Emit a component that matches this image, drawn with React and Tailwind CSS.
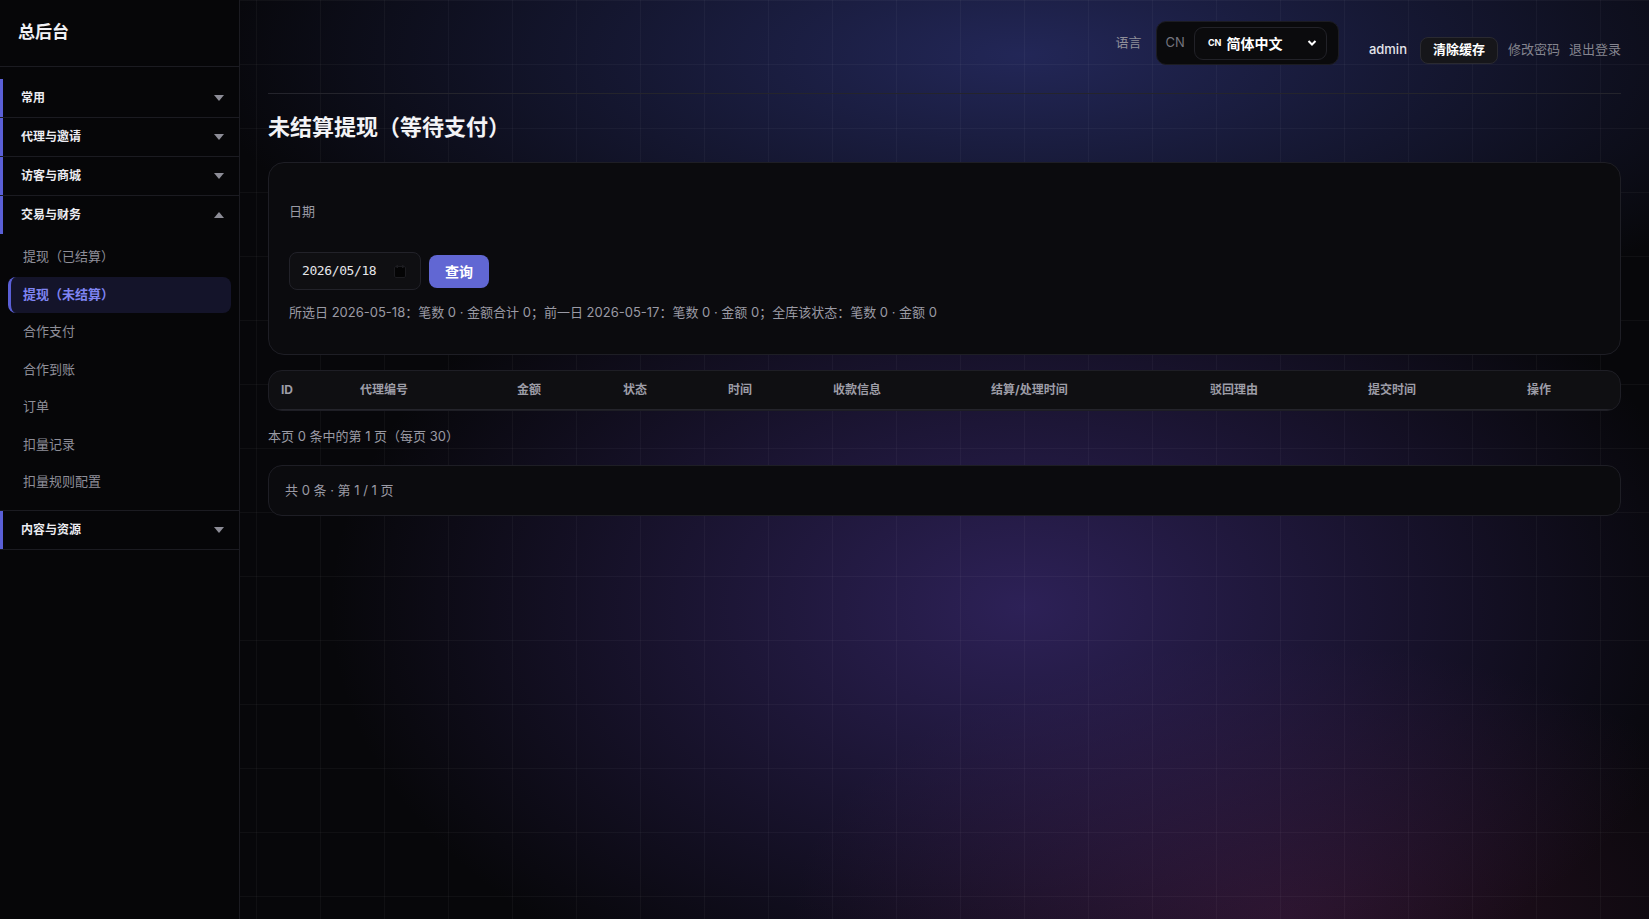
import React from 'react';

const groups = [
  { label: '常用' },
  { label: '代理与邀请' },
  { label: '访客与商城' },
  {
    label: '交易与财务',
    open: true,
    items: ['提现（已结算）', '提现（未结算）', '合作支付', '合作到账', '订单', '扣量记录', '扣量规则配置'],
    active: '提现（未结算）',
  },
  { label: '内容与资源' },
];

const columns = ['ID', '代理编号', '金额', '状态', '时间', '收款信息', '结算/处理时间', '驳回理由', '提交时间', '操作'];

function Caret({ up }) {
  return (
    <svg width="10" height="6" viewBox="0 0 10 6" className={up ? 'rotate-180' : ''}>
      <path d="M0 0h10L5 6z" fill="#8c8c96" />
    </svg>
  );
}

function Sidebar() {
  return (
    <aside className="w-[240px] shrink-0 h-full bg-[#060608] border-r border-[#1b1b21] flex flex-col">
      <div className="h-[67px] flex items-center pl-[18px] border-b border-[#1b1b21]">
        <span className="text-[17px] font-bold text-[#f1f1f4]">总后台</span>
      </div>
      <nav className="pt-3">
        {groups.map((g) => (
          <div key={g.label} className="border-b border-[#1b1b21]">
            <div className="h-[38px] flex items-center justify-between border-l-[3px] border-[#5a5fd6] pl-[18px] pr-[15px]">
              <span className="text-[12px] font-bold text-[#ececf1]">{g.label}</span>
              <Caret up={g.open} />
            </div>
            {g.open && (
              <div className="flex flex-col gap-[1.5px] pt-[5px] pb-[10px] px-2">
                {g.items.map((it) =>
                  it === g.active ? (
                    <div key={it} className="h-9 flex items-center rounded-lg border-l-[3px] border-[#5a5fd6] bg-[#14142a] pl-3 text-[13px] font-bold text-[#7f84f2]">
                      {it}
                    </div>
                  ) : (
                    <div key={it} className="h-9 flex items-center pl-[15px] text-[13px] text-[#8e8e98]">
                      {it}
                    </div>
                  )
                )}
              </div>
            )}
          </div>
        ))}
      </nav>
    </aside>
  );
}

function TopBar() {
  return (
    <div className="flex justify-end items-start border-b border-[#24242c] pt-[21px] pb-[28px]">
      <div className="flex items-center gap-[14px]">
        <span className="text-[13px] text-[#8f8f99]">语言</span>
        <div className="h-[44px] flex items-center rounded-[10px] border border-[#1c1c22] bg-[#0a0a0c] pl-[9px] pr-[11px] gap-[9px]">
          <span className="text-[13px] text-[#74747e]">CN</span>
          <div className="w-[133px] h-[33px] flex items-center justify-between rounded-[9px] border border-[#222228] bg-[#0b0b0d] pl-[13px] pr-[9px]">
            <span className="flex items-center gap-[5px] text-white">
              <span className="text-[9px] font-bold">CN</span>
              <span className="text-[14px] font-bold">简体中文</span>
            </span>
            <svg width="10" height="8" viewBox="0 0 10 8">
              <path d="M1.5 2l3.5 3.5L8.5 2" stroke="#fff" strokeWidth="2" fill="none" />
            </svg>
          </div>
        </div>
      </div>
      <div className="flex items-center mt-[15px] ml-[30px] h-[28px]">
        <span className="text-[13px] font-medium text-[#e4e4ea]">admin</span>
        <button className="ml-[13px] h-[27px] px-[12px] rounded-lg border border-[#2a2a31] bg-[#16161a] text-[13px] font-bold text-white">
          清除缓存
        </button>
        <span className="ml-[10px] text-[13px] text-[#85858f]">修改密码</span>
        <span className="ml-[9px] text-[13px] text-[#85858f]">退出登录</span>
      </div>
    </div>
  );
}

function FilterCard() {
  return (
    <div className="mt-5 rounded-2xl border border-[#1e1e25] bg-[#0b0b0e] px-[20px] pt-[38px] pb-[32px]">
      <div className="text-[13px] leading-5 text-[#9a9aa4]">日期</div>
      <div className="mt-[31px] flex items-center gap-2">
        <div className="w-[132px] h-[38px] flex items-center justify-between rounded-lg border border-[#222229] bg-[#0f0f12] pl-[12px] pr-[14px]">
          <span className="text-[13px] text-[#e6e6ea] font-['DejaVu_Sans_Mono',monospace] tracking-[-0.4px]">2026/05/18</span>
          <svg width="12" height="13" viewBox="0 0 12 13">
            <rect x="0.5" y="1.5" width="11" height="11" rx="1.5" fill="#040405" stroke="#1c1c20" />
            <rect x="2.5" y="0" width="1.5" height="3" fill="#1c1c20" />
            <rect x="8" y="0" width="1.5" height="3" fill="#1c1c20" />
          </svg>
        </div>
        <button className="w-[60px] h-[33px] rounded-lg bg-[#6167d3] text-[14px] font-bold text-white">查询</button>
      </div>
      <div className="mt-[12px] text-[13px] leading-5 text-[#9a9aa4]">
        所选日 2026-05-18：笔数 0 · 金额合计 0；前一日 2026-05-17：笔数 0 · 金额 0；全库该状态：笔数 0 · 金额 0
      </div>
    </div>
  );
}

function TableHead() {
  return (
    <div className="mt-[15px] rounded-[14px] border border-[#1e1e25] bg-[#0f0f12] overflow-hidden">
      <div className="h-[39px] grid grid-cols-[79px_157px_106px_105px_105px_158px_219px_158px_159px_1fr] items-center pl-[12px] border-b border-[#24242b]">
        {columns.map((c) => (
          <span key={c} className="text-[12px] font-bold text-[#9d9da7]">
            {c}
          </span>
        ))}
      </div>
    </div>
  );
}

export default function App() {
  return (
    <div className="relative h-screen w-full overflow-hidden bg-[#07070a] font-['Inter','Noto_Sans_CJK_SC',sans-serif] flex">
      {/* soft colour glows behind the page */}
      <div className="pointer-events-none absolute inset-0 bg-[image:radial-gradient(ellipse_50%_32%_at_62%_6%,rgba(46,52,120,0.7),transparent),radial-gradient(ellipse_42%_48%_at_62%_66%,rgba(76,54,150,0.55),transparent),radial-gradient(ellipse_30%_30%_at_78%_100%,rgba(120,40,95,0.3),transparent)]" />
      {/* faint grid */}
      <div className="pointer-events-none absolute inset-0 bg-[image:linear-gradient(rgba(255,255,255,0.035)_1px,transparent_1px),linear-gradient(90deg,rgba(255,255,255,0.035)_1px,transparent_1px)] bg-[size:64px_64px]" />
      <div className="relative z-10 flex w-full h-full">
        <Sidebar />
        <main className="flex-1 px-7">
          <TopBar />
          <h1 className="mt-[18px] text-[22px] leading-[30px] font-bold text-[#f3f3f6]">未结算提现（等待支付）</h1>
          <FilterCard />
          <TableHead />
          <div className="mt-[15px] text-[13px] leading-5 text-[#9a9aa4]">本页 0 条中的第 1 页（每页 30）</div>
          <div className="mt-[19px] h-[51px] flex items-center rounded-[14px] border border-[#1e1e25] bg-[#0b0b0e] px-4">
            <span className="text-[13px] text-[#9a9aa4]">共 0 条 · 第 1 / 1 页</span>
          </div>
        </main>
      </div>
    </div>
  );
}
